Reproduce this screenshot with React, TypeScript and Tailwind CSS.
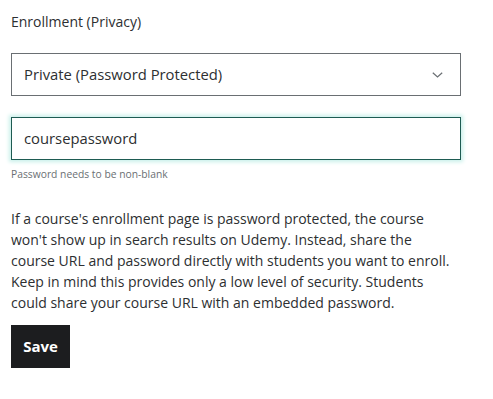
export default function App() {
  return (
    <div className="min-h-[399px] w-[493px] bg-white font-['Open_Sans',sans-serif] text-[#2d2f31]">
      <div className="w-[472px] px-[11px] pt-[12px]">
        <label className="block text-[14px] leading-[20px]">Enrollment (Privacy)</label>

        <div className="mt-[21px] flex h-[43px] items-center justify-between border border-[#6a6f73] pr-[17px] pl-[12px]">
          <span className="text-[14.8px]">Private (Password Protected)</span>
          <svg width="11" height="6" viewBox="0 0 11 6" fill="none">
            <path d="M0.8 0.8 L5.5 5 L10.2 0.8" stroke="#6a6f73" strokeWidth="1.2" />
          </svg>
        </div>

        <div className="mt-[21px] flex h-[43px] items-center border border-[#1e5b52] pl-[12px] shadow-[0_0_4px_2px_#c9f0ea]">
          <span className="text-[14.8px]">coursepassword</span>
        </div>
        <p className="mt-[6px] text-[10.3px] leading-[16px] text-[#6a6f73]">
          Password needs to be non-blank
        </p>

        <p className="mt-[26px] w-[446px] text-[14px] leading-[21px]">
          If a course's enrollment page is password protected, the course won't show up in
          search results on Udemy. Instead, share the course URL and password directly with
          students you want to enroll. Keep in mind this provides only a low level of
          security. Students could share your course URL with an embedded password.
        </p>

        <button className="mt-[12px] flex h-[43px] w-[59px] items-center justify-center bg-[#1c1d1f] text-[15px] font-bold text-white">
          Save
        </button>
      </div>
    </div>
  );
}
